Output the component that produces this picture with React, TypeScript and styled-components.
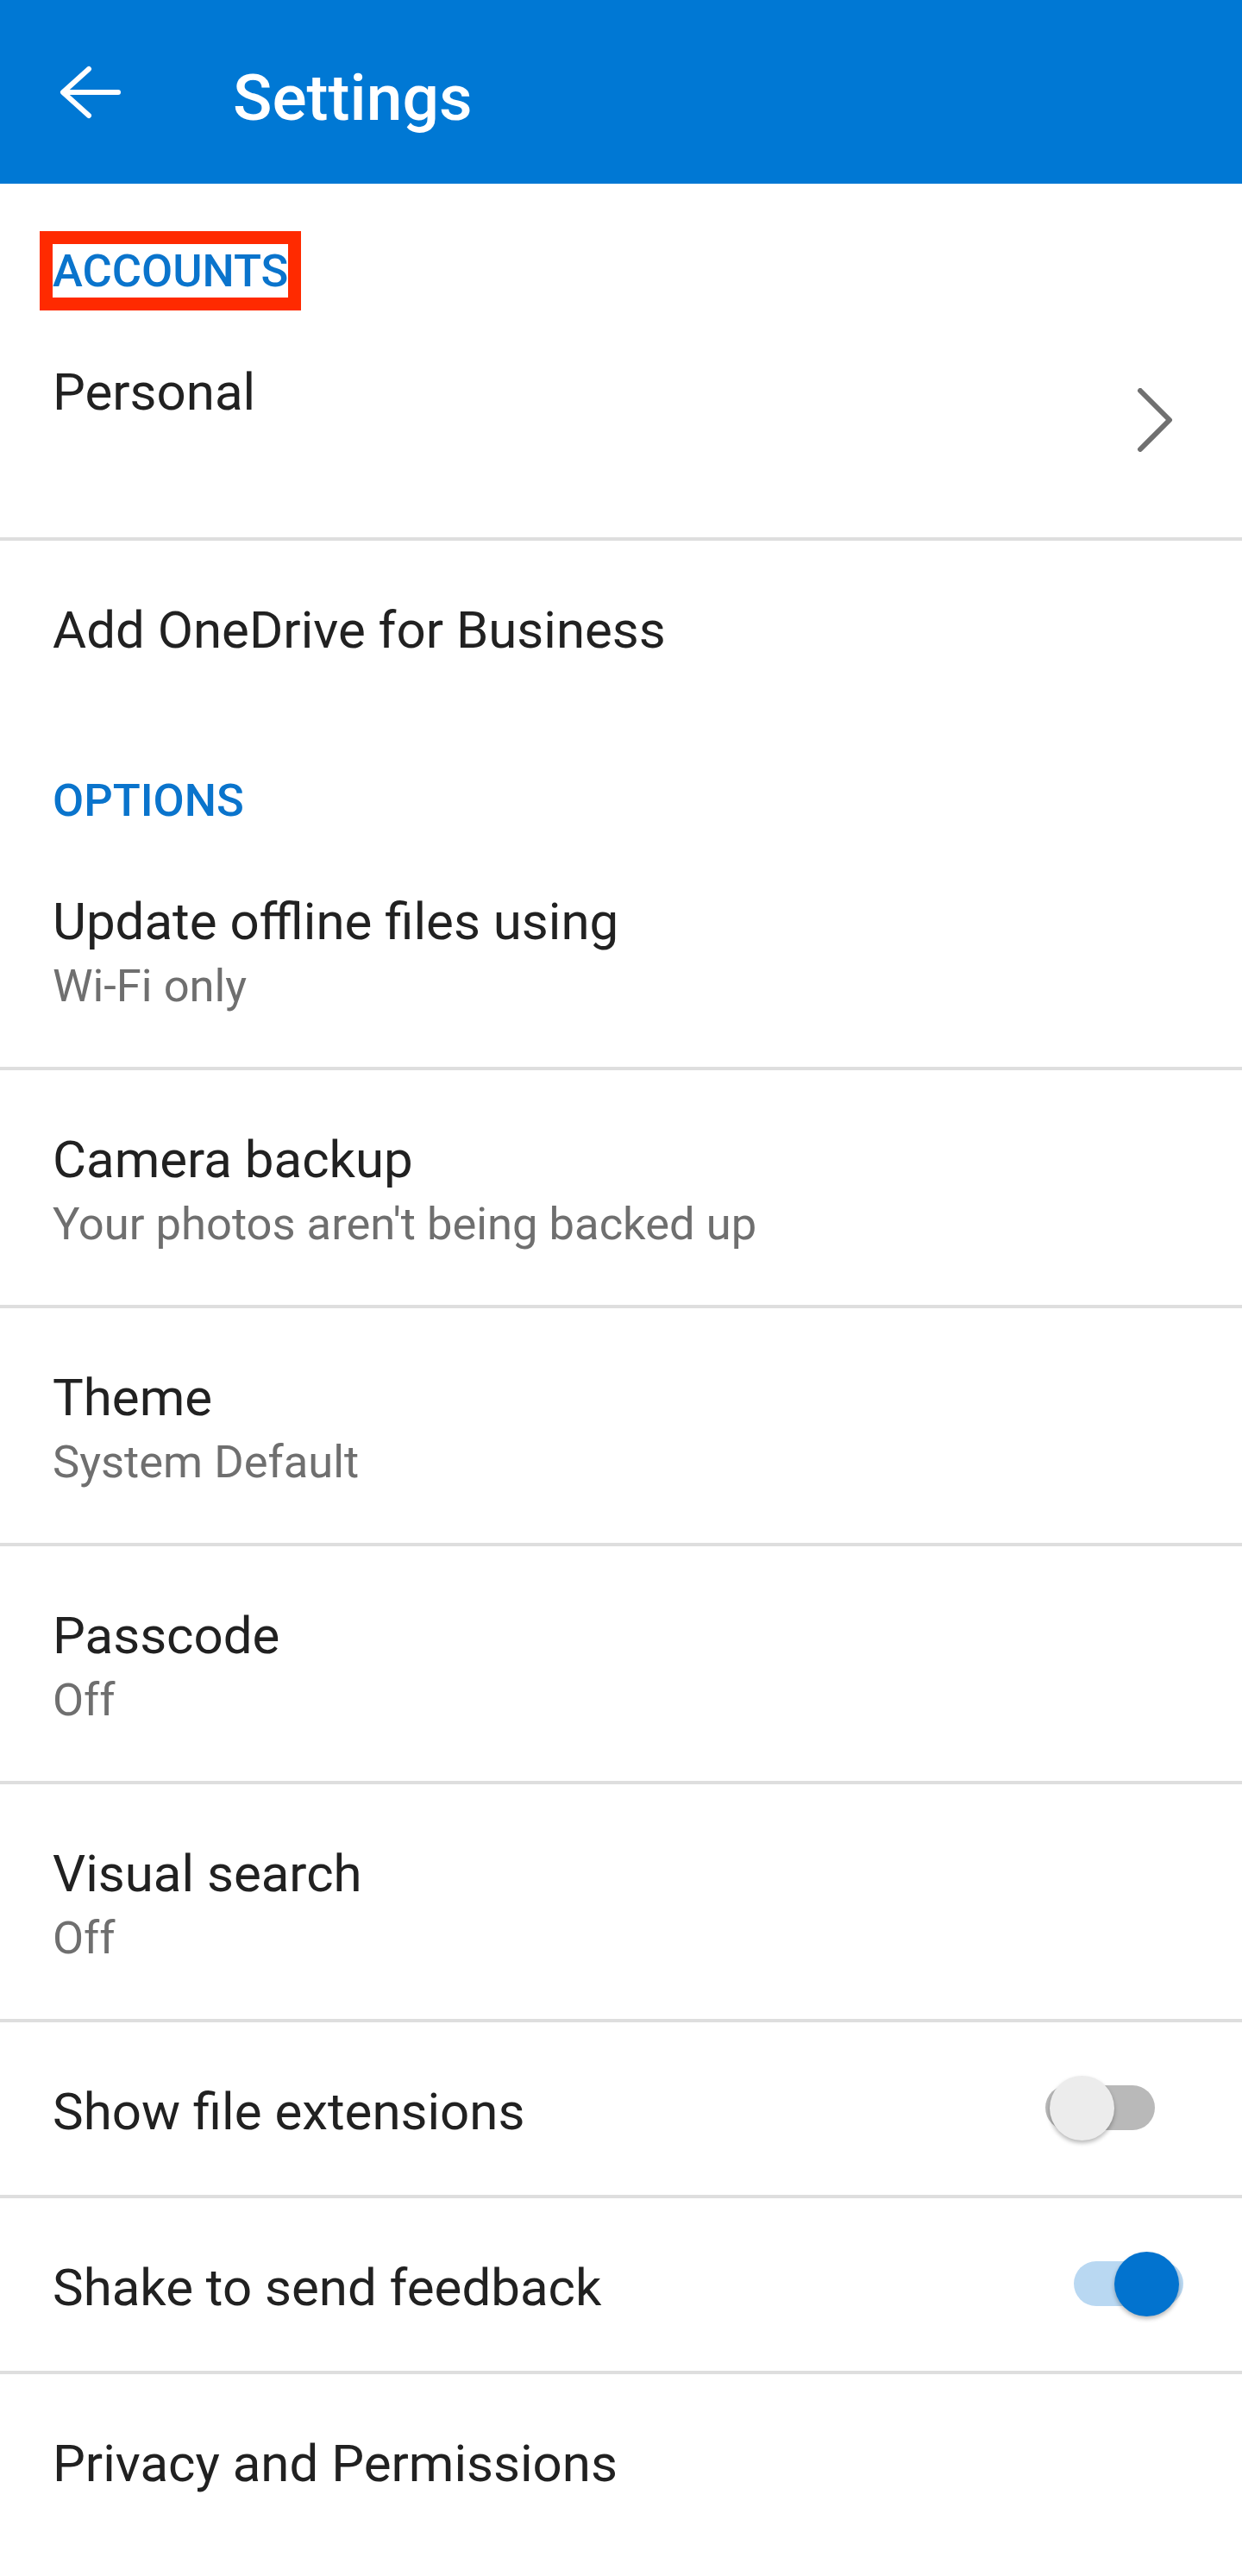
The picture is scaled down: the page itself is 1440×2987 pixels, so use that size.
import React from "react";
import styled, { createGlobalStyle } from "styled-components";

interface SettingItem {
	title: string;
	subtitle?: string;
	chevron?: boolean;
	toggle?: "on" | "off";
	divider?: boolean;
}

interface SectionData {
	label: string;
	highlight?: boolean;
	items: SettingItem[];
}

const sections: SectionData[] = [
	{
		label: "ACCOUNTS",
		highlight: true,
		items: [
			{ title: "Personal", subtitle: "\u00a0", chevron: true, divider: true },
			{ title: "Add OneDrive for Business" },
		],
	},
	{
		label: "OPTIONS",
		items: [
			{ title: "Update offline files using", subtitle: "Wi-Fi only", divider: true },
			{ title: "Camera backup", subtitle: "Your photos aren't being backed up", divider: true },
			{ title: "Theme", subtitle: "System Default", divider: true },
			{ title: "Passcode", subtitle: "Off", divider: true },
			{ title: "Visual search", subtitle: "Off", divider: true },
			{ title: "Show file extensions", toggle: "off", divider: true },
			{ title: "Shake to send feedback", toggle: "on", divider: true },
			{ title: "Privacy and Permissions" },
		],
	},
];

const BackArrow = () => (
	<svg width="72" height="62" viewBox="0 0 72 62" fill="none">
		<polyline
			points="34,4 4,31 34,58"
			stroke="#fff"
			strokeWidth="6"
			strokeLinecap="round"
			strokeLinejoin="round"
		/>
		<line x1="5" y1="31" x2="68" y2="31" stroke="#fff" strokeWidth="6" strokeLinecap="round" />
	</svg>
);

const ChevronIcon = () => (
	<Chevron width="42" height="74" viewBox="0 0 42 74" fill="none">
		<polyline
			points="4,3 38,37 4,71"
			stroke="#707070"
			strokeWidth="6"
			strokeLinecap="round"
			strokeLinejoin="round"
		/>
	</Chevron>
);

const Switch: React.FC<{ on: boolean }> = ({ on }) => (
	<SwitchBox $on={on}>
		<Track $on={on}>
			<Thumb $on={on} />
		</Track>
	</SwitchBox>
);

const Row: React.FC<{ item: SettingItem }> = ({ item }) => (
	<RowWrap $divider={!!item.divider}>
		<Texts>
			<Title>{item.title}</Title>
			{item.subtitle && <Subtitle>{item.subtitle}</Subtitle>}
		</Texts>
		{item.chevron && <ChevronIcon />}
		{item.toggle && <Switch on={item.toggle === "on"} />}
	</RowWrap>
);

const App: React.FC = () => {
	return (
		<>
			<GlobalStyle />
			<Page>
				<Header>
					<BackArrow />
					<HeaderTitle>Settings</HeaderTitle>
				</Header>
				{sections.map((section) => (
					<Section key={section.label}>
						<SectionLabel>
							{section.highlight ? <Highlight>{section.label}</Highlight> : section.label}
						</SectionLabel>
						{section.items.map((item) => (
							<Row key={item.title} item={item} />
						))}
					</Section>
				))}
			</Page>
		</>
	);
};

export default App;

const GlobalStyle = createGlobalStyle`
	html, body {
		margin: 0;
		padding: 0;
		background: #ffffff;
	}
	body {
		font-family: Roboto, "Noto Sans", "Liberation Sans", sans-serif;
	}
`;

const Page = styled.div`
	width: 1440px;
	min-height: 2987px;
	background-color: #ffffff;
	display: flex;
	flex-direction: column;
`;

const Header = styled.div`
	box-sizing: border-box;
	height: 213px;
	padding-left: 69px;
	display: flex;
	align-items: center;
	background-color: #0078d4;
`;

const HeaderTitle = styled.div`
	margin-left: 129px;
	padding-top: 12px;
	color: #ffffff;
	font-size: 75px;
	font-weight: 500;
`;

const Section = styled.div`
	display: flex;
	flex-direction: column;
`;

const SectionLabel = styled.div`
	box-sizing: border-box;
	height: 138px;
	padding: 70px 0 0 61px;
	font-size: 52.5px;
	font-weight: 500;
	line-height: 62px;
	color: #0a74cc;
`;

const Highlight = styled.span`
	outline: 15px solid #ff2a00;
`;

type DividerProp = { $divider: boolean };

const RowWrap = styled.div<DividerProp>`
	box-sizing: border-box;
	padding: 66px 68px 58px 61px;
	display: flex;
	align-items: center;
	justify-content: space-between;
	border-bottom: ${(props) => (props.$divider ? "4px solid #dedede" : "none")};
`;

const Texts = styled.div`
	display: flex;
	flex-direction: column;
`;

const Title = styled.div`
	font-size: 60px;
	line-height: 76px;
	color: #212121;
`;

const Subtitle = styled.div`
	font-size: 52.5px;
	line-height: 72px;
	color: #6f6f6f;
`;

const Chevron = styled.svg`
	margin-right: 12px;
	margin-bottom: 8px;
	flex-shrink: 0;
`;

type OnProp = { $on: boolean };

const SwitchBox = styled.div<OnProp>`
	width: 160px;
	height: 76px;
	margin-top: -10px;
	display: flex;
	align-items: center;
	justify-content: ${(props) => (props.$on ? "flex-end" : "flex-start")};
	flex-shrink: 0;
`;

const Track = styled.div<OnProp>`
	position: relative;
	width: 127px;
	height: 52px;
	border-radius: 26px;
	background-color: ${(props) => (props.$on ? "#b9d8f2" : "#b9b9b9")};
`;

const Thumb = styled.div<OnProp>`
	position: absolute;
	top: -11px;
	left: ${(props) => (props.$on ? "47px" : "5px")};
	width: 75px;
	height: 75px;
	border-radius: 50%;
	background-color: ${(props) => (props.$on ? "#0273cf" : "#ececec")};
	box-shadow: 0 3px 5px rgba(0, 0, 0, 0.28);
`;
